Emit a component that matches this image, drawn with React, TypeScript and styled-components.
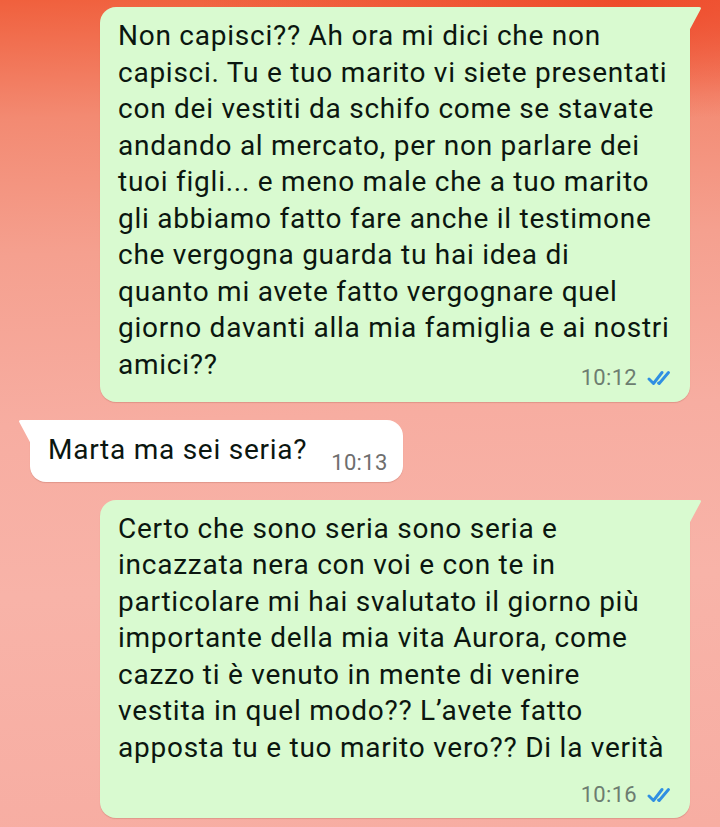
import React, { FunctionComponent } from 'react';
import styled, { createGlobalStyle } from 'styled-components';

const GlobalStyle = createGlobalStyle`
  html, body {
    margin: 0;
    padding: 0;
  }
  body {
    font-family: Roboto, "Noto Sans", "Liberation Sans", sans-serif;
  }
`;

const Chat = styled.div`
  width: 720px;
  height: 827px;
  overflow: hidden;
  box-sizing: border-box;
  padding-top: 7px;
  display: flex;
  flex-direction: column;
  background:
    radial-gradient(ellipse 420px 120px at 620px 0px, rgba(238, 72, 40, 0.9), rgba(238, 72, 40, 0) 100%),
    linear-gradient(178deg, #f0603d 0%, #f38a72 14%, #f5a08f 30%, #f7ada1 50%, #f8b3a8 70%, #f7ada2 100%);
`;

const Row = styled.div<{ $out?: boolean; $gap: number }>`
  display: flex;
  padding-left: ${(p) => (p.$out ? '100px' : '30px')};
  margin-bottom: ${(p) => p.$gap}px;
`;

const Bubble = styled.div<{ $out?: boolean; $width?: number }>`
  position: relative;
  box-sizing: border-box;
  width: ${(p) => (p.$width ? `${p.$width}px` : 'auto')};
  background: ${(p) => (p.$out ? '#d9fad0' : '#ffffff')};
  border-radius: ${(p) => (p.$out ? '16px 0 16px 16px' : '0 16px 16px 16px')};
  box-shadow: 0 1px 1px rgba(120, 40, 30, 0.18);
  padding: ${(p) => (p.$out ? '11px 17px 16px 18px' : '12px 15px 13px 18px')};
  color: #0b160f;
`;

const Tail = styled.svg<{ $out?: boolean }>`
  position: absolute;
  top: 0;
  ${(p) => (p.$out ? 'right: -12px;' : 'left: -12px;')}
  width: 13px;
  height: 24px;
`;

const Text = styled.div`
  font-size: 28px;
  line-height: 36.5px;
  letter-spacing: 0.75px;
  white-space: pre-line;
`;

const LastRow = styled.div`
  display: flex;
  justify-content: space-between;
  align-items: flex-end;
  margin-bottom: 3px;
`;

const Meta = styled.div<{ $below?: boolean }>`
  display: flex;
  justify-content: flex-end;
  align-items: center;
  gap: 10px;
  height: 24px;
  margin-top: ${(p) => (p.$below ? '17px' : '0')};
  margin-bottom: ${(p) => (p.$below ? '-5px' : '-7px')};
`;

const Time = styled.span<{ $in?: boolean }>`
  font-size: 22px;
  line-height: 24px;
  letter-spacing: 0.3px;
  color: ${(p) => (p.$in ? '#6e6e6e' : '#6d7d70')};
`;

const InlineRow = styled.div`
  display: flex;
  align-items: flex-end;
  gap: 24px;
`;

const InMeta = styled.div`
  height: 24px;
  margin-bottom: -6px;
`;

const Ticks = () => (
  <svg width="26" height="16" viewBox="0 0 26 16" fill="none">
    <path d="M2 9 L6.5 13.5 L15 2.5" stroke="#2f8fe2" strokeWidth="2.9" strokeLinecap="round" strokeLinejoin="round" />
    <path d="M11.5 13 L12.2 13.5 L21.5 2.5" stroke="#2f8fe2" strokeWidth="2.9" strokeLinecap="round" strokeLinejoin="round" />
  </svg>
);

interface MsgProps {
  out?: boolean;
  width?: number;
  children: any;
}

const Msg: FunctionComponent<MsgProps> = ({ out, width, children }) => (
  <Bubble $out={out} $width={width}>
    <Tail $out={out} viewBox="0 0 13 24">
      {out ? (
        <path d="M0 0 H10 Q13 0 11.5 2.5 L0 24 Z" fill="#d9fad0" />
      ) : (
        <path d="M13 0 H3 Q0 0 1.5 2.5 L13 24 Z" fill="#ffffff" />
      )}
    </Tail>
    {children}
  </Bubble>
);

const first = `Non capisci?? Ah ora mi dici che non
capisci. Tu e tuo marito vi siete presentati
con dei vestiti da schifo come se stavate
andando al mercato, per non parlare dei
tuoi figli... e meno male che a tuo marito
gli abbiamo fatto fare anche il testimone
che vergogna guarda tu hai idea di
quanto mi avete fatto vergognare quel
giorno davanti alla mia famiglia e ai nostri`;

const third = `Certo che sono seria sono seria e
incazzata nera con voi e con te in
particolare mi hai svalutato il giorno più
importante della mia vita Aurora, come
cazzo ti è venuto in mente di venire
vestita in quel modo?? L’avete fatto
apposta tu e tuo marito vero?? Di la verità`;

const App: FunctionComponent = () => {
  return (
    <>
      <GlobalStyle />
      <Chat>
        <Row $out $gap={18}>
          <Msg out width={590}>
            <Text>{first}</Text>
            <LastRow>
              <Text>amici??</Text>
              <Meta>
                <Time>10:12</Time>
                <Ticks />
              </Meta>
            </LastRow>
          </Msg>
        </Row>
        <Row $gap={18}>
          <Msg>
            <InlineRow>
              <Text>Marta ma sei seria?</Text>
              <InMeta>
                <Time $in>10:13</Time>
              </InMeta>
            </InlineRow>
          </Msg>
        </Row>
        <Row $out $gap={0}>
          <Msg out width={590}>
            <Text>{third}</Text>
            <Meta $below>
              <Time>10:16</Time>
              <Ticks />
            </Meta>
          </Msg>
        </Row>
      </Chat>
    </>
  );
};

export default App;
